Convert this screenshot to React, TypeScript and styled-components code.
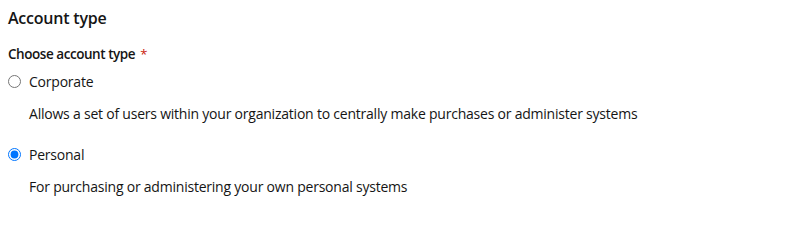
import React, { useState } from 'react'
import styled, { createGlobalStyle } from 'styled-components'

const GlobalStyle = createGlobalStyle`
  html, body {
    margin: 0;
    padding: 0;
    background: #ffffff;
  }
  body {
    font-family: 'Open Sans', 'Noto Sans', sans-serif;
    color: #151515;
    letter-spacing: -0.22px;
  }
`

const Form = styled.form`
  display: flex;
  flex-direction: column;
  padding: 6px 8px 0 8px;
`
const Title = styled.h2`
  margin: 0 0 14px 0;
  font-size: 16px;
  font-weight: 600;
  line-height: 24px;
`
const GroupLabel = styled.div`
  display: flex;
  align-items: baseline;
  font-size: 13.5px;
  font-weight: 600;
  letter-spacing: -0.45px;
  line-height: 21px;
  margin-bottom: 6px;
`
const Required = styled.span`
  color: #c9190b;
  font-size: 13px;
  font-weight: 400;
  margin-left: 5px;
`
const RadioList = styled.div`
  display: flex;
  flex-direction: column;
  gap: 20px;
`
const Radio = styled.div`
  display: grid;
  grid-template-columns: 13px 1fr;
  column-gap: 8px;
  row-gap: 11px;
  align-items: center;
`
const Input = styled.input`
  width: 13px;
  height: 13px;
  margin: 0;
`
const Label = styled.label`
  font-size: 14px;
  line-height: 21px;
  cursor: pointer;
`
const Description = styled.div`
  grid-column: 2;
  font-size: 14px;
  line-height: 21px;
`

type Option = {
  id: string
  label: string
  description: string
}

const options: Option[] = [
  {
    id: 'corporate',
    label: 'Corporate',
    description:
      'Allows a set of users within your organization to centrally make purchases or administer systems'
  },
  {
    id: 'personal',
    label: 'Personal',
    description: 'For purchasing or administering your own personal systems'
  }
]

const App = () => {
  const [value, setValue] = useState('personal')

  return (
    <>
      <GlobalStyle />
      <Form>
        <Title>Account type</Title>
        <GroupLabel>
          Choose account type
          <Required>*</Required>
        </GroupLabel>
        <RadioList>
          {options.map(option => (
            <Radio key={option.id}>
              <Input
                type='radio'
                id={option.id}
                name='account-type'
                checked={value === option.id}
                onChange={() => setValue(option.id)}
              />
              <Label htmlFor={option.id}>{option.label}</Label>
              <Description>{option.description}</Description>
            </Radio>
          ))}
        </RadioList>
      </Form>
    </>
  )
}

export default App
